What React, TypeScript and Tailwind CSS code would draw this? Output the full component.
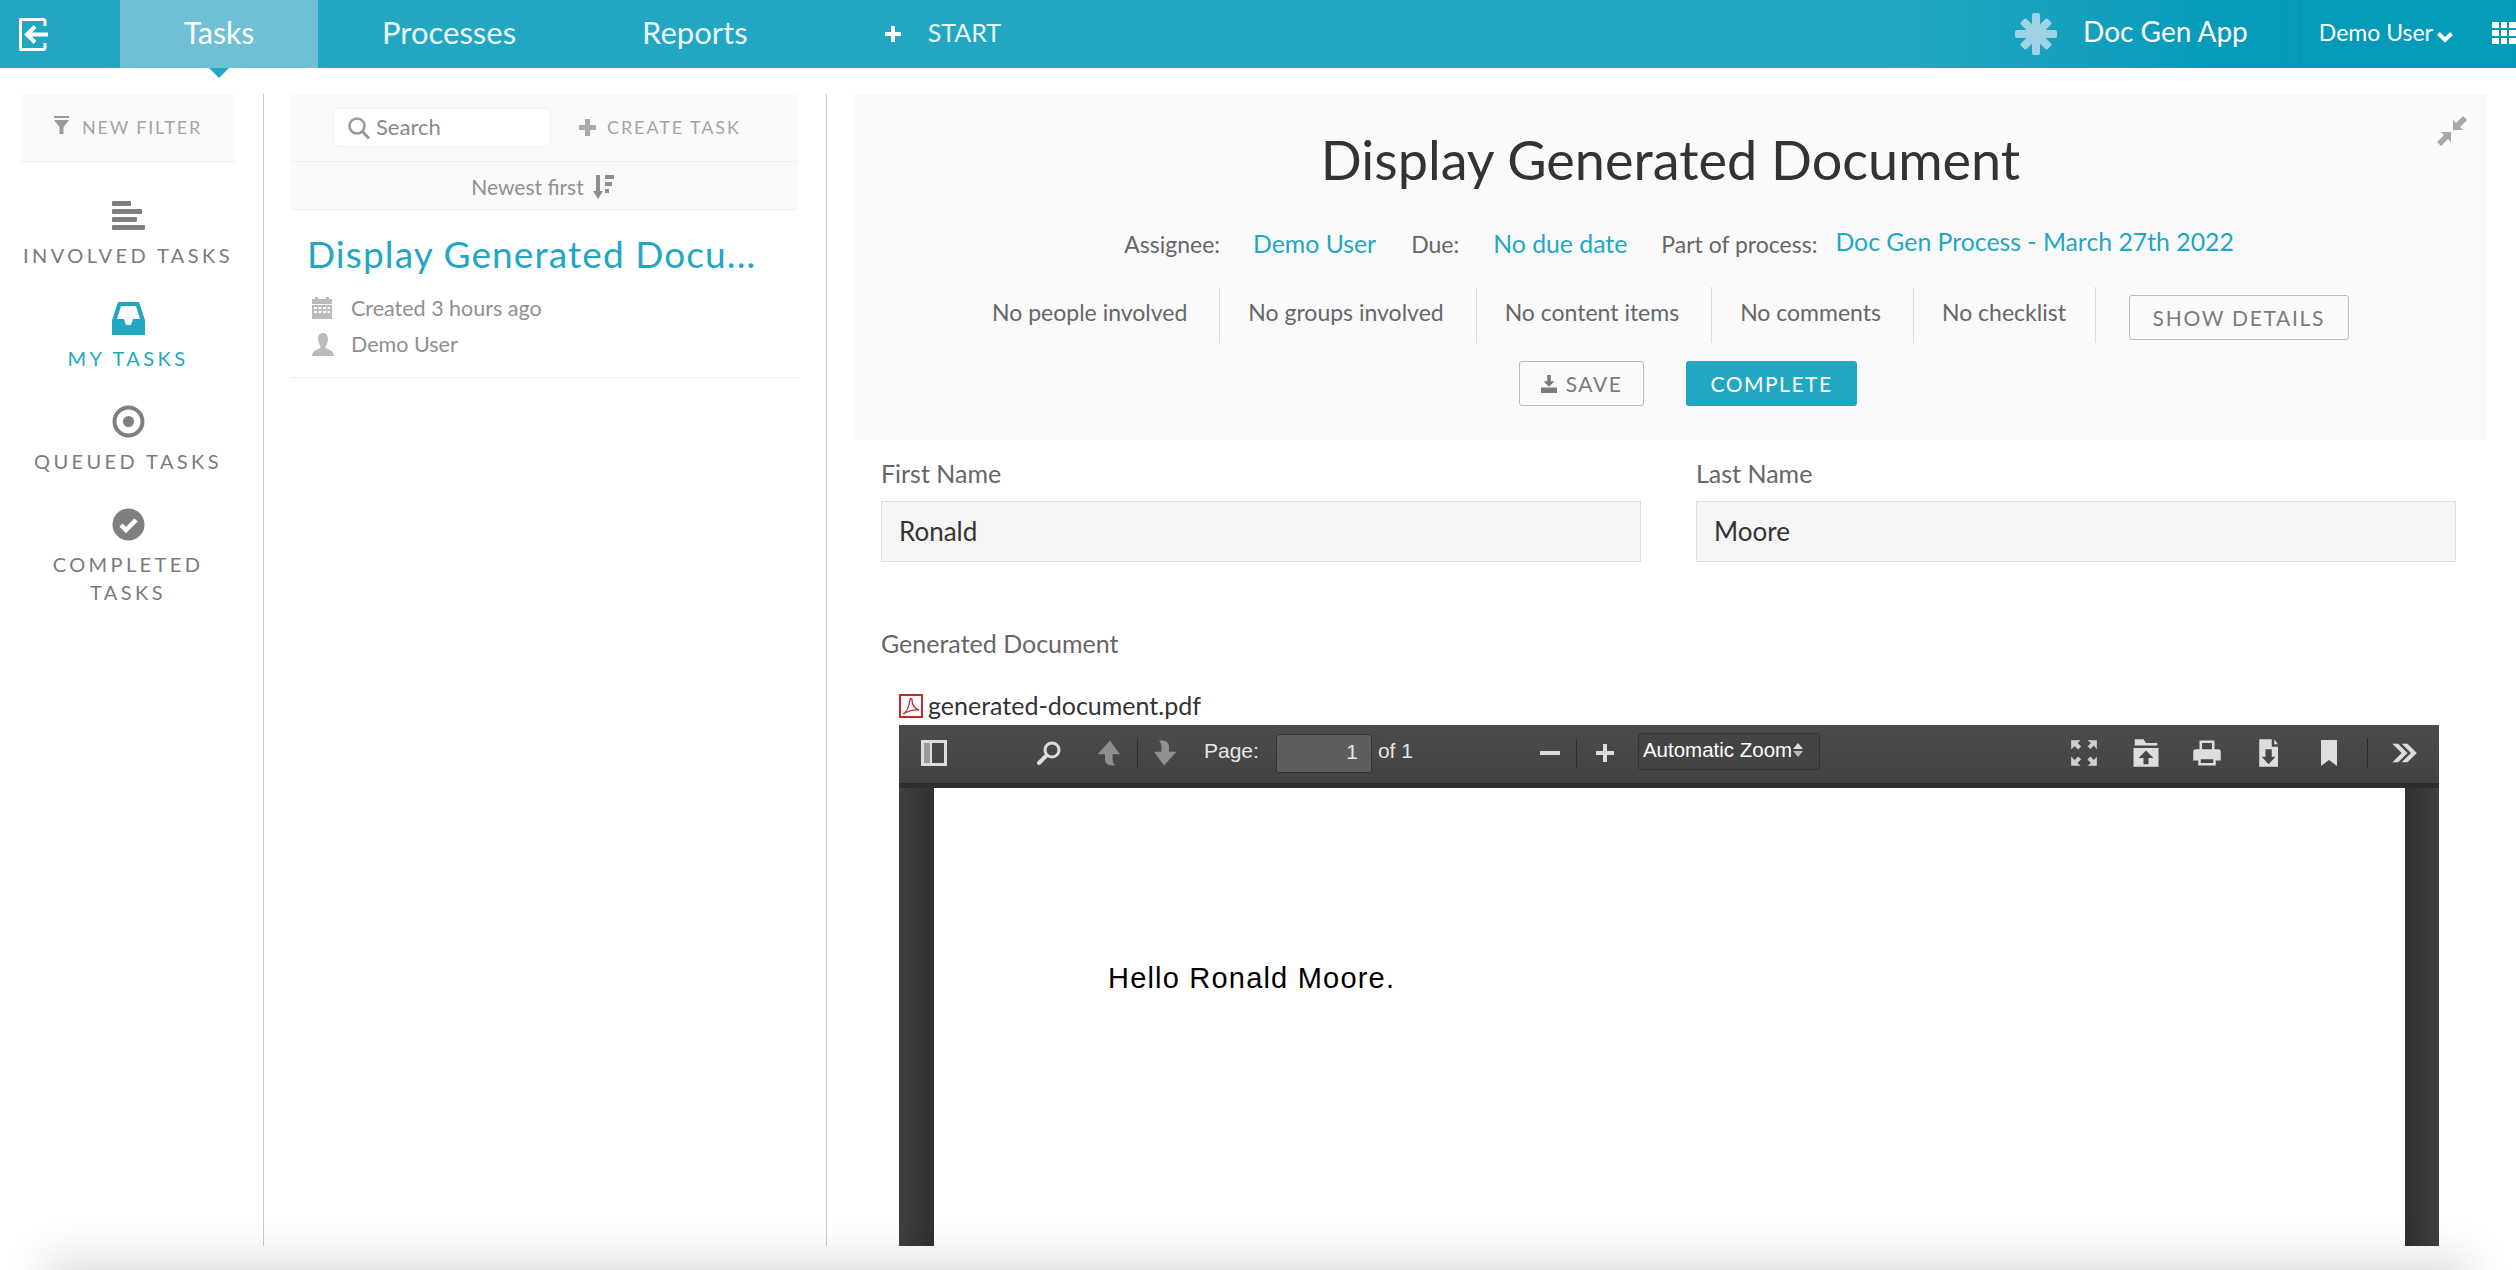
import type { ReactNode } from "react";

const lato = "font-['Lato','Liberation_Sans',sans-serif]";

/* ─── Toolbar glyphs ─── */
function Glyph({ className, children }: { className: string; children: ReactNode }) {
  return (
    <svg viewBox="0 0 24 24" fill="currentColor" className={className}>
      {children}
    </svg>
  );
}

function BackIcon() {
  return (
    <svg viewBox="0 0 33 33" className="h-[33px] w-[33px]" fill="none" stroke="#fff" strokeWidth="3">
      <path d="M28 8V3.5a2 2 0 0 0-2-2H3.5v30H26a2 2 0 0 0 2-2V25" strokeLinejoin="round" />
      <path d="M31 16.5H11M18 8.5l-8 8 8 8" strokeWidth="4" />
    </svg>
  );
}

function StarLogo() {
  return (
    <svg viewBox="0 0 42 42" className="h-[42px] w-[42px]" fill="#9fd3e3">
      <rect x="17" y="0" width="8" height="42" rx="2" />
      <rect x="0" y="17" width="42" height="8" rx="2" />
      <rect x="17" y="2" width="8" height="38" rx="2" transform="rotate(45 21 21)" />
      <rect x="17" y="2" width="8" height="38" rx="2" transform="rotate(-45 21 21)" />
    </svg>
  );
}

function PdfIcon() {
  return (
    <svg viewBox="0 0 24 24" className="h-[24px] w-[24px]" fill="none">
      <rect x="1" y="1" width="22" height="22" fill="#fff" stroke="#c4282d" strokeWidth="2" />
      <path d="M4 20c4-2 6-7 7-14 0-2 2-2 2 0 0 5 3 9 7 10-4-.5-10 .5-16 4Z" stroke="#c4282d" strokeWidth="1.3" />
    </svg>
  );
}

/* ─── Left nav ─── */
function NavItem({
  icon,
  label,
  active,
}: {
  icon: ReactNode;
  label: ReactNode;
  active?: boolean;
}) {
  return (
    <div className={`flex flex-col items-center ${active ? "text-[#22a7c3]" : "text-[#7b7b7b]"}`}>
      <div className="flex h-[33px] items-center justify-center">{icon}</div>
      <div className="mb-[1px] mt-[9px] text-center text-[20px] leading-[28px] tracking-[3.4px]">{label}</div>
    </div>
  );
}

function FactItem({ children, last }: { children: string; last?: boolean }) {
  return (
    <div className={`flex h-[56px] items-start pt-[11px] text-[23px] leading-[28px] text-[#666] ${last ? "pr-[29px]" : "pr-[32px] mr-[28px]"} border-r border-[#ddd]`}>
      {children}
    </div>
  );
}

function Field({ label, value }: { label: string; value: string }) {
  return (
    <div className="w-[760px]">
      <div className="text-[25px] leading-[30px] text-[#666]">{label}</div>
      <div className="mt-[13px] flex h-[61px] items-center border border-[#ddd] bg-[#f5f5f5] px-[17px] text-[26px] text-[#333]">
        {value}
      </div>
    </div>
  );
}

/* ─── PDF viewer ─── */
function PdfToolbar() {
  return (
    <div className="flex h-[58px] items-center bg-gradient-to-b from-[#4b4b4b] to-[#434343] font-['Liberation_Sans',sans-serif] text-[#e6e6e6] shadow-[0_5px_0_#2e2e2e]">
      <svg viewBox="0 0 26 26" className="mb-[2px] ml-[22px] h-[26px] w-[26px]">
        <rect x="1.5" y="1.5" width="23" height="23" fill="none" stroke="#ddd" strokeWidth="3" />
        <rect x="3" y="3" width="7" height="20" fill="#9a9a9a" />
        <rect x="9" y="3" width="2" height="20" fill="#ddd" />
      </svg>
      <svg viewBox="0 0 26 26" className="mb-[2px] ml-[89px] h-[26px] w-[26px]" fill="none" stroke="#ddd">
        <circle cx="16" cy="10" r="7" strokeWidth="3" />
        <path d="M10 16l-7 7" strokeWidth="4" strokeLinecap="round" />
      </svg>
      <Glyph className="mb-[2px] ml-[33px] h-[30px] w-[30px] text-[#8f8f8f]">
        <path d="M12 2 2 13h6v4c0 3 2 5 6 5h2c-1-1-2-3-2-6v-3h6Z" />
      </Glyph>
      <div className="ml-[12px] h-[30px] w-px bg-[#2d2d2d]" />
      <Glyph className="mb-[2px] ml-[11px] h-[30px] w-[30px] text-[#8f8f8f]">
        <path d="M12 22 22 11h-6V7c0-3-2-5-6-5H8c1 1 2 3 2 6v3H4Z" />
      </Glyph>
      <span className="mb-[7px] ml-[25px] text-[21px]">Page:</span>
      <div className="mb-[2px] ml-[17px] flex h-[39px] w-[96px] items-center justify-end rounded-[3px] border border-[#333] bg-[#5d5d5d] pb-[2px] pr-[13px] text-[21px]">
        1
      </div>
      <span className="mb-[7px] ml-[6px] text-[21px]">of 1</span>
      <div className="mb-[2px] ml-[127px] h-[4px] w-[20px] bg-[#ddd]" />
      <div className="ml-[16px] h-[30px] w-px bg-[#2d2d2d]" />
      <div className="relative mb-[2px] ml-[19px] h-[18px] w-[18px]">
        <div className="absolute left-0 top-[7px] h-[4px] w-[18px] bg-[#ddd]" />
        <div className="absolute left-[7px] top-0 h-[18px] w-[4px] bg-[#ddd]" />
      </div>
      <div className="mb-[5px] ml-[24px] flex h-[37px] w-[182px] items-center rounded-[3px] border border-[#333] bg-[#444] pb-[3px] pl-[4px] text-[20.5px] text-white">
        Automatic Zoom
        <span className="ml-[1px] flex flex-col gap-[2px]">
          <span className="h-0 w-0 border-x-[5px] border-b-[6px] border-x-transparent border-b-[#ddd]" />
          <span className="h-0 w-0 border-x-[5px] border-t-[6px] border-x-transparent border-t-[#bbb]" />
        </span>
      </div>
      <div className="mb-[2px] ml-auto flex items-center pr-[21px]">
        <Glyph className="h-[28px] w-[28px] text-[#cfcfcf]">
          <path d="M1 1h8L6.500 3.500l3 3-2.500 2.500-3-3L1 9ZM23 1v8l-2.500-3.500-3 3L15 6.500l3-3L15 1ZM1 23v-8l3 3 3-3 2.500 2.500-3 3L9 23ZM23 23h-8l3-2.500-3-3 2.500-2.500 3 3 2.500-3Z" />
        </Glyph>
        <Glyph className="ml-[33px] h-[30px] w-[30px] text-[#ddd]">
          <path d="M3 1h7l2 3h9v2H3ZM2 8h20v15H2Zm10 2-6 6h4v5h4v-5h4Z" fillRule="evenodd" />
        </Glyph>
        <Glyph className="ml-[31px] h-[30px] w-[30px] text-[#ddd]">
          <path d="M6 2h12v7h3a2 2 0 0 1 2 2v7h-4v4H5v-4H1v-7a2 2 0 0 1 2-2h3Zm2 2v5h8V4ZM7 17v3h10v-3Z" fillRule="evenodd" />
        </Glyph>
        <Glyph className="ml-[31px] h-[30px] w-[30px] text-[#ddd]">
          <path d="M5 1h10v6h5v16H5Zm12 0 3 4h-3ZM10 9v6H7l5.500 6 5.500-6h-3V9Z" fillRule="evenodd" />
        </Glyph>
        <svg viewBox="0 0 16 26" className="ml-[38px] h-[26px] w-[16px]" fill="#ddd">
          <path d="M0 0h16v26l-8-6-8 6Z" />
        </svg>
        <div className="ml-[30px] h-[30px] w-px bg-[#2d2d2d]" />
        <Glyph className="ml-[22px] h-[28px] w-[28px] text-[#ddd]">
          <path d="M2 4h5l8 8-8 8H2l8-8ZM10 4h5l8 8-8 8h-5l8-8Z" />
        </Glyph>
      </div>
    </div>
  );
}

export default function App() {
  return (
    <div className={`relative flex h-[1270px] w-[2516px] flex-col overflow-hidden bg-white ${lato}`}>
      {/* Top bar */}
      <header className="flex h-[68px] shrink-0 items-center bg-gradient-to-r from-[#22a7c3] from-75% to-[#049bbb] to-88% text-[#e9f6fa]">
        <div className="flex w-[120px] items-center pl-[17px]">
          <BackIcon />
        </div>
        <div className="relative flex h-full w-[198px] items-center justify-center bg-[#6fc0d5] pb-[4px] text-[30px] text-white">
          Tasks
          <div className="absolute left-[89px] top-[68px] h-0 w-0 border-x-[10px] border-t-[10px] border-x-transparent border-t-[#22a7c3]" />
        </div>
        <span className="mb-[4px] ml-[64px] text-[31px]">Processes</span>
        <span className="mb-[4px] ml-[126px] text-[31px]">Reports</span>
        <div className="relative ml-[137px] h-[16px] w-[16px]">
          <div className="absolute left-0 top-[6px] h-[4px] w-[16px] bg-white" />
          <div className="absolute left-[6px] top-0 h-[16px] w-[4px] bg-white" />
        </div>
        <span className="mb-[2px] ml-[27px] text-[25px]">START</span>
        <div className="ml-auto flex h-full items-center">
          <StarLogo />
          <span className="mb-[6px] ml-[26px] text-[28px] text-white">Doc Gen App</span>
          <div className="ml-[52px] flex h-full items-center border-l border-[#0a8fab] pb-[3px] pl-[18px] text-[23px] text-white">
            Demo User
            <svg viewBox="0 0 16 12" className="ml-[4px] mt-[8px] h-[12px] w-[16px]" fill="none" stroke="#fff" strokeWidth="4">
              <path d="M1.500 2.500 8 9l6.500-6.500" />
            </svg>
            <div className="ml-[39px] grid w-[24px] grid-cols-3 gap-[2px]">
              {Array.from({ length: 9 }).map((_, i) => (
                <div key={i} className="h-[6px] bg-white" />
              ))}
            </div>
          </div>
        </div>
      </header>

      <div className="flex min-h-0 flex-1 pb-[24px] pt-[26px]">
        {/* Filter nav */}
        <aside className="w-[264px] shrink-0 border-r border-[#ccc] pl-[21px] pr-[28px]">
          <div className="flex h-[68px] items-center justify-center border-b border-[#f0f0f0] bg-[#fafafa] text-[18px] tracking-[1.8px] text-[#a5a5a5]">
            <svg viewBox="0 0 15 18" className="mr-[13px] mt-[-6px] h-[18px] w-[15px]" fill="#999">
              <rect width="15" height="2" />
              <path d="M0 4h15L9.500 11v7h-4v-7Z" />
            </svg>
            NEW FILTER
          </div>
          <div className="mt-[37px] flex flex-col gap-[32px]">
            <NavItem
              label={<span className="whitespace-nowrap">INVOLVED TASKS</span>}
              icon={
                <div className="flex h-[30px] w-[33px] flex-col justify-between">
                  <div className="h-[5px] w-[19px] rounded-[1px] bg-[#7f7f7f]" />
                  <div className="h-[5px] w-[30px] rounded-[1px] bg-[#7f7f7f]" />
                  <div className="h-[5px] w-[25px] rounded-[1px] bg-[#7f7f7f]" />
                  <div className="h-[5px] w-[33px] rounded-[1px] bg-[#7f7f7f]" />
                </div>
              }
            />
            <NavItem
              active
              label="MY TASKS"
              icon={
                <svg viewBox="0 0 33 33" className="h-[33px] w-[33px]" fill="#22a7c3">
                  <path fillRule="evenodd" d="M6 0h21l6 18v15H0V18ZM9 4 5 17h7l2 6h5l2-6h7L24 4Z" />
                </svg>
              }
            />
            <NavItem
              label="QUEUED TASKS"
              icon={
                <svg viewBox="0 0 33 33" className="h-[33px] w-[33px]" fill="none" stroke="#7f7f7f">
                  <circle cx="16.500" cy="16.500" r="14" strokeWidth="4" />
                  <circle cx="16.500" cy="16.500" r="5.500" fill="#7f7f7f" strokeWidth="0" />
                </svg>
              }
            />
            <NavItem
              label={
                <>
                  COMPLETED
                  <br />
                  TASKS
                </>
              }
              icon={
                <svg viewBox="0 0 33 33" className="h-[33px] w-[33px]">
                  <circle cx="16.500" cy="16.500" r="16" fill="#7f7f7f" />
                  <path d="m9 17 5 5 10-10" fill="none" stroke="#fff" strokeWidth="4.500" />
                </svg>
              }
            />
          </div>
        </aside>

        {/* Task list */}
        <section className="w-[563px] shrink-0 border-r border-[#ccc] pl-[27px] pr-[28px]">
          <div className="flex h-[68px] items-center border-b border-[#f0f0f0] bg-[#fafafa] pl-[42px] text-[#a5a5a5]">
            <div className="flex h-[39px] w-[218px] items-center rounded-[6px] border border-[#f2f2f2] bg-white pb-[2px] pl-[13px] text-[22px] text-[#8a8a8a]">
              <svg viewBox="0 0 24 24" className="mr-[5px] mt-[2px] h-[24px] w-[24px]" fill="none" stroke="#999">
                <circle cx="10" cy="10" r="7.500" strokeWidth="2.500" />
                <path d="m15.500 15.500 6.500 7" strokeWidth="3" />
              </svg>
              Search
            </div>
            <div className="relative ml-[28px] h-[17px] w-[17px]">
              <div className="absolute left-0 top-[6px] h-[5px] w-[17px] bg-[#aaa]" />
              <div className="absolute left-[6px] top-0 h-[17px] w-[5px] bg-[#aaa]" />
            </div>
            <span className="ml-[11px] text-[18px] tracking-[1.9px]">CREATE TASK</span>
          </div>
          <div className="flex h-[48px] items-center justify-center border-b border-[#f0f0f0] bg-[#fafafa] pr-[4px] pt-[3px] text-[21px] text-[#8f8f8f]">
            Newest first
            <svg viewBox="0 0 21 24" className="ml-[9px] h-[24px] w-[21px]" fill="#8f8f8f">
              <path d="M3 0h4v16h3l-5 8-5-8h3ZM12 0h9v4h-9ZM12 7h7v4h-7ZM12 14h4v4h-4Z" />
            </svg>
          </div>
          <div className="border-b border-[#f0f0f0] pb-[22px] pl-[16px] pt-[22px]">
            <div className="whitespace-nowrap text-[37px] leading-[44px] tracking-[1.1px] text-[#22a7c3]">
              Display Generated Docu...
            </div>
            <div className="mt-[21px] flex h-[22px] items-center text-[21.5px] text-[#8f8f8f]">
              <svg viewBox="0 0 20 22" className="ml-[5px] mr-[19px] h-[22px] w-[20px]" fill="#bbb">
                <path fillRule="evenodd" d="M3 0h3v2h8V0h3v2h3v5H0V2h3ZM0 8h20v14H0Zm2 2v2h3v-2Zm4.500 0v2h3v-2Zm4.500 0v2h3v-2Zm4.500 0v2h2.500v-2ZM2 14v2h3v-2Zm4.500 0v2h3v-2Zm4.500 0v2h3v-2Zm4.500 0v2h2.500v-2Z" />
              </svg>
              Created 3 hours ago
            </div>
            <div className="mt-[14px] flex h-[22px] items-center text-[21.5px] text-[#8f8f8f]">
              <svg viewBox="0 0 22 23" className="ml-[5px] mr-[17px] h-[23px] w-[22px]" fill="#bbb">
                <path d="M11 0c3.500 0 5 3 5 6s-1.500 6-2.500 7v2c3 1 8.500 3 8.500 8H0c0-5 5.500-7 8.500-8v-2C7.500 12 6 9 6 6s1.500-6 5-6Z" />
              </svg>
              Demo User
            </div>
          </div>
        </section>

        {/* Task detail */}
        <main className="min-w-0 flex-1 pl-[27px] pr-[29px]">
          <div className="relative h-[346px] bg-[#fafafa]">
            <svg viewBox="0 0 30 30" className="absolute right-[20px] top-[22px] h-[30px] w-[30px]" fill="#a8a8a8">
              <path d="m0 26 7-7-3-3h10v10l-3-3-7 7ZM30 4l-7 7 3 3H16V4l3 3 7-7Z" />
            </svg>
            <h1 className="pt-[30px] text-center text-[54px] font-normal leading-[72px] text-[#333]">
              Display Generated Document
            </h1>
            <div className="mt-[33px] flex items-baseline justify-center pl-[17px] text-[23px] leading-[30px] text-[#666]">
              <span>Assignee:</span>
              <span className="ml-[33px] text-[24.8px] text-[#22a7c3]">Demo User</span>
              <span className="ml-[35px]">Due:</span>
              <span className="ml-[34px] text-[24.8px] text-[#22a7c3]">No due date</span>
              <span className="ml-[34px]">Part of process:</span>
              <span className="ml-[18px] -translate-y-[2px] text-[24.8px] text-[#22a7c3]">Doc Gen Process - March 27th 2022</span>
            </div>
            <div className="mt-[28px] flex justify-center">
              <FactItem>No people involved</FactItem>
              <FactItem>No groups involved</FactItem>
              <FactItem>No content items</FactItem>
              <FactItem>No comments</FactItem>
              <FactItem last>No checklist</FactItem>
              <div className="ml-[33px] mt-[8px] flex h-[45px] w-[220px] items-center justify-center rounded-[3px] border border-[#bbb] text-[21px] tracking-[1.7px] text-[#7b7b7b]">
                SHOW DETAILS
              </div>
            </div>
            <div className="mt-[18px] flex justify-center gap-[42px] pl-[35px]">
              <div className="flex h-[45px] w-[125px] items-center justify-center rounded-[3px] border border-[#bbb] text-[21px] tracking-[1.5px] text-[#7b7b7b]">
                <svg viewBox="0 0 18 20" className="mr-[9px] h-[18px] w-[16px]" fill="#7b7b7b">
                  <path d="M7 0h4v7h4l-6 6-6-6h4ZM0 14h18v6H0Z" />
                </svg>
                SAVE
              </div>
              <div className="flex h-[45px] w-[171px] items-center justify-center rounded-[3px] bg-[#22a7c3] text-[21px] tracking-[1.5px] text-white">
                COMPLETE
              </div>
            </div>
          </div>

          <div className="ml-[27px] mt-[18px] flex w-[1575px] justify-between">
            <Field label="First Name" value="Ronald" />
            <Field label="Last Name" value="Moore" />
          </div>

          <div className="ml-[27px] mt-[66px] text-[25px] leading-[30px] text-[#666]">Generated Document</div>

          <div className="ml-[45px] mt-[33px] flex h-[30px] items-center text-[25px] text-[#333]">
            <PdfIcon />
            <span className="ml-[5px]">generated-document.pdf</span>
          </div>

          <div className="ml-[45px] mt-[4px] flex h-[521px] w-[1540px] flex-col overflow-hidden bg-[#3e3e3e]">
            <PdfToolbar />
            <div className="mt-[5px] flex min-h-0 flex-1">
              <div className="w-[35px] bg-gradient-to-r from-[#404040] to-[#303030]" />
              <div className="flex-1 bg-white pl-[174px] pt-[170px] font-['Liberation_Sans',sans-serif] text-[29px] leading-[40px] tracking-[1.2px] text-black">
                Hello Ronald Moore.
              </div>
              <div className="w-[34px] bg-gradient-to-l from-[#404040] to-[#303030]" />
            </div>
          </div>
        </main>
      </div>

      {/* Window edge shadow along the bottom */}
      <div className="pointer-events-none absolute left-[60px] right-[60px] top-[1270px] h-[40px] shadow-[0_0_40px_15px_rgba(0,0,0,0.12)]" />
    </div>
  );
}
